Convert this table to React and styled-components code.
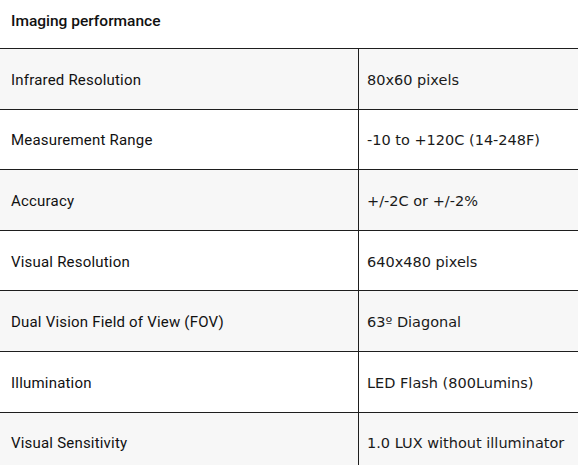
import React from "react"
import styled, { createGlobalStyle } from "styled-components"

const GlobalStyle = createGlobalStyle`
  body {
    margin: 0;
    background: #ffffff;
    font-family: Roboto, "Liberation Sans", sans-serif;
    color: #111;
  }
`

const specs = [
  { label: "Infrared Resolution", value: "80x60 pixels" },
  { label: "Measurement Range", value: "-10 to +120C (14-248F)" },
  { label: "Accuracy", value: "+/-2C or +/-2%" },
  { label: "Visual Resolution", value: "640x480 pixels" },
  { label: "Dual Vision Field of View (FOV)", value: "63º Diagonal" },
  { label: "Illumination", value: "LED Flash (800Lumins)" },
  { label: "Visual Sensitivity", value: "1.0 LUX without illuminator" },
]

const Wrapper = styled.section`
  width: 578px;
  height: 465px;
  overflow: hidden;
`

const Heading = styled.h3`
  margin: 0;
  height: 49px;
  display: flex;
  align-items: center;
  padding: 0 11px 6px;
  font-family: Roboto, sans-serif;
  font-weight: 500;
  font-size: 15.5px;
  border-bottom: 1px solid #1e1e1e;
  box-sizing: border-box;
`

const Row = styled.div`
  display: grid;
  grid-template-columns: 359px 1fr;
  height: 60.6px;
  border-bottom: 1px solid #1e1e1e;
  box-sizing: border-box;
  background: ${(p) => (p.$shaded ? "#f7f7f7" : "#ffffff")};
`

const Label = styled.div`
  display: flex;
  align-items: center;
  padding: 2px 11px 0;
  font-family: Roboto, sans-serif;
  font-size: 15px;
  letter-spacing: 0.2px;
  border-right: 1px solid #1e1e1e;
`

const Value = styled.div`
  display: flex;
  align-items: center;
  padding: 2px 8px 0;
  font-family: "DejaVu Sans", sans-serif;
  font-size: 14.5px;
  color: #1a1a1a;
`

const App = () => (
  <>
    <GlobalStyle />
    <Wrapper>
      <Heading>Imaging performance</Heading>
      {specs.map((s, i) => (
        <Row key={s.label} $shaded={i % 2 === 0}>
          <Label>{s.label}</Label>
          <Value>{s.value}</Value>
        </Row>
      ))}
    </Wrapper>
  </>
)

export default App
